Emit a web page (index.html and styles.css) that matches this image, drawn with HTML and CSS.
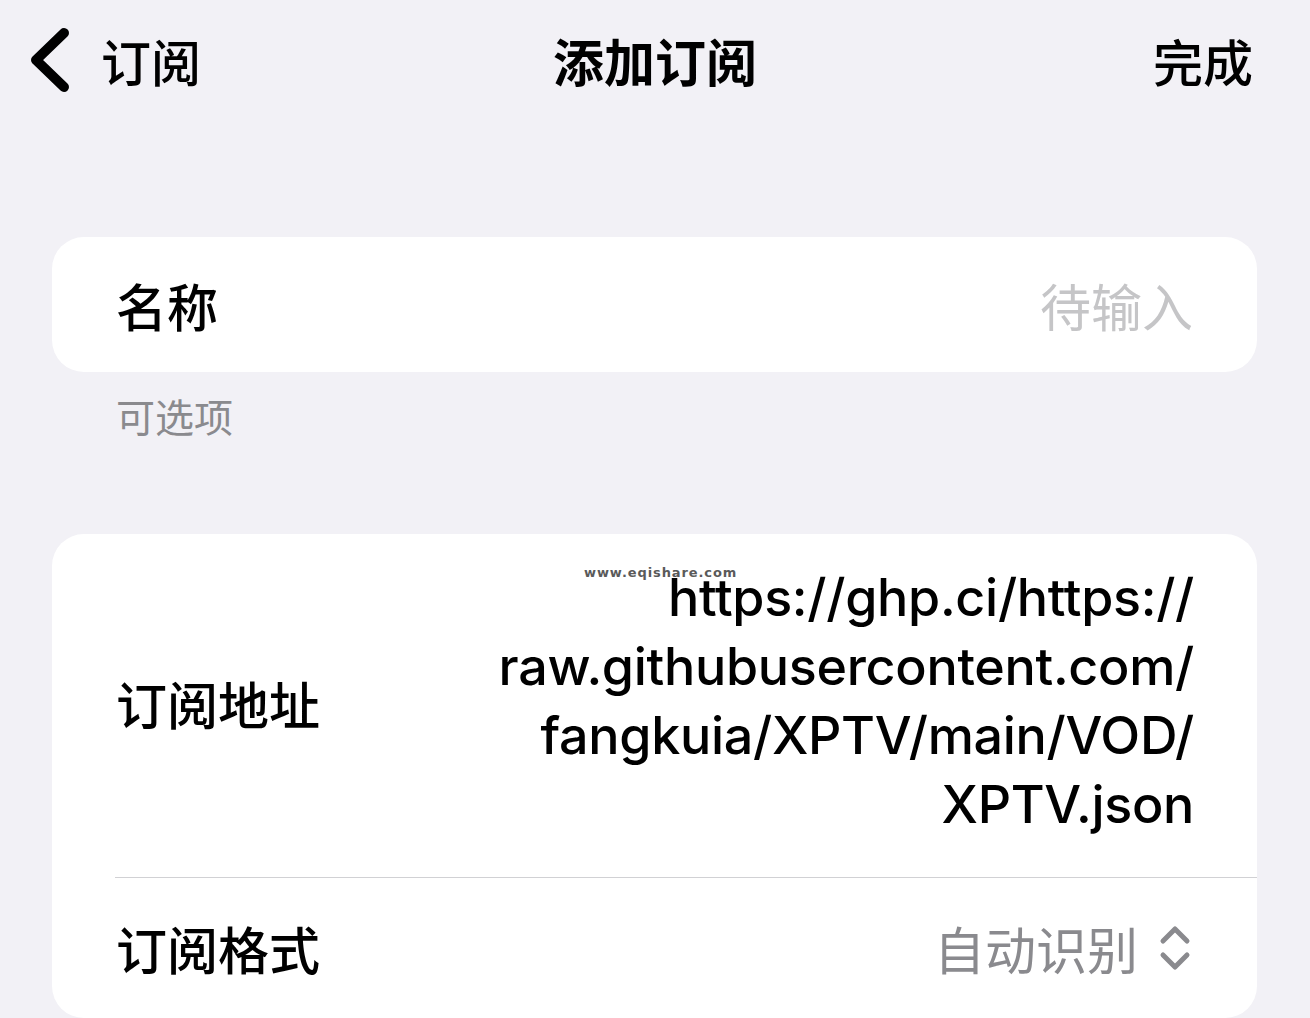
FILE: index.html
```html
<!DOCTYPE html>
<html lang="zh-CN">

<head>
    <meta charset="UTF-8" />
    <meta name="viewport" content="width=device-width, initial-scale=1.0" />
    <title>添加订阅</title>
    <link rel="stylesheet" href="styles.css">
</head>

<body>
    <header class="nav">
        <a class="nav-back" href="#">
            <svg class="nav-back-icon" width="40" height="64" viewBox="0 0 40 64">
                <polyline points="34,5 6,32 34,59" fill="none" stroke="#000" stroke-width="10"
                    stroke-linecap="round" stroke-linejoin="round" />
            </svg>
            <span>订阅</span>
        </a>
        <h1 class="nav-title">添加订阅</h1>
        <a class="nav-done" href="#">完成</a>
    </header>

    <main class="form">
        <section class="group">
            <div class="card">
                <div class="row row-name">
                    <span class="row-label">名称</span>
                    <span class="row-placeholder">待输入</span>
                </div>
            </div>
            <p class="group-footer">可选项</p>
        </section>

        <section class="group group-sub">
            <div class="card">
                <div class="row row-url">
                    <span class="row-label">订阅地址</span>
                    <span class="row-url-text">https://ghp.ci/https://<br>raw.githubusercontent.com/<br>fangkuia/XPTV/main/VOD/<br>XPTV.json</span>
                </div>
                <div class="row row-format">
                    <span class="row-label">订阅格式</span>
                    <span class="row-value">
                        自动识别
                        <svg class="updown" width="32" height="48" viewBox="0 0 32 48">
                            <polyline points="4,17 16,5 28,17" fill="none" stroke="#8a8a8e" stroke-width="5"
                                stroke-linecap="round" stroke-linejoin="round" />
                            <polyline points="4,31 16,43 28,31" fill="none" stroke="#8a8a8e" stroke-width="5"
                                stroke-linecap="round" stroke-linejoin="round" />
                        </svg>
                    </span>
                </div>
            </div>
            <span class="watermark">www.eqishare.com</span>
        </section>
    </main>
</body>

</html>
```

FILE: styles.css
```css
:root {
    --fundo: #f2f1f6;
    --branco: #ffffff;
    --preto: #000000;
    --cinza: #8a8a8e;
    --cinza-claro: #c5c5c7;
    --linha: #d1d1d4;
}

body {
    margin: 0;
    font-family: 'Inter', 'Noto Sans CJK SC', sans-serif;
    background-color: var(--fundo);
    color: var(--preto);
}

a {
    color: inherit;
    text-decoration: none;
}

.nav {
    height: 120px;
    padding: 0 30px;
    display: grid;
    grid-template-columns: 1fr auto 1fr;
    align-items: center;
}

.nav-back {
    display: flex;
    align-items: center;
    gap: 31px;
    font-size: 50px;
    font-weight: 500;
}

.nav-back-icon {
    display: block;
}

.nav-title {
    margin: 0;
    font-size: 51px;
    font-weight: 700;
}

.nav-done {
    justify-self: end;
    margin-right: 27px;
    font-size: 50px;
    font-weight: 500;
}

.form {
    padding: 117px 53px 0 52px;
}

.group {
    position: relative;
}

.group-sub {
    margin-top: 91px;
}

.card {
    background: var(--branco);
    border-radius: 32px;
    overflow: hidden;
}

.row {
    display: flex;
    align-items: center;
    justify-content: space-between;
    padding: 0 64px 0 64px;
    font-size: 51px;
    font-weight: 500;
}

.row-name {
    height: 135px;
}

.row-placeholder {
    color: var(--cinza-claro);
    font-weight: 400;
}

.group-footer {
    margin: 15px 0 0 64px;
    font-size: 39px;
    color: var(--cinza);
}

.row-url {
    height: 344px;
    padding-bottom: 10px;
    box-sizing: border-box;
    position: relative;
}

.row-url .row-label {
    margin-top: 4px;
}

.row-url::after {
    content: '';
    position: absolute;
    left: 63px;
    right: 0;
    bottom: 0;
    height: 1px;
    background: var(--linha);
}

.row-url-text {
    text-align: right;
    line-height: 69px;
    font-size: 52px;
    font-weight: 500;
    letter-spacing: -0.3px;
    margin-right: -1px;
}

.row-format {
    height: 140px;
}

.row-value {
    display: flex;
    align-items: center;
    gap: 21px;
    color: var(--cinza);
    font-weight: 400;
    margin-right: 2px;
}

.updown {
    display: block;
}

.watermark {
    position: absolute;
    left: 532px;
    top: 31px;
    font-family: 'DejaVu Sans', sans-serif;
    font-size: 13px;
    font-weight: 700;
    color: #5a5a5a;
    letter-spacing: 0.9px;
}
```
